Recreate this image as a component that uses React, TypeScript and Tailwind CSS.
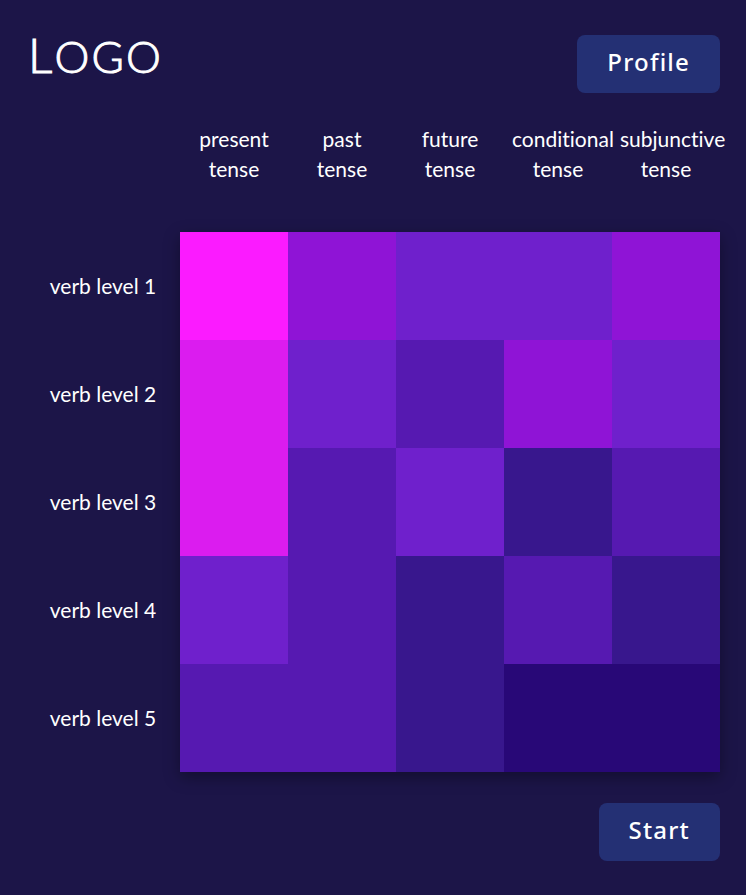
const tenses = ['present', 'past', 'future', 'conditional', 'subjunctive'];

const shades = {
  a: 'bg-[#fb1bff]',
  b: 'bg-[#db1cef]',
  c: 'bg-[#8f14d6]',
  d: 'bg-[#6f20cc]',
  e: 'bg-[#5619b1]',
  f: 'bg-[#38178d]',
  g: 'bg-[#280877]',
};

type Shade = keyof typeof shades;

const levels: Shade[][] = [
  ['a', 'c', 'd', 'd', 'c'],
  ['b', 'd', 'e', 'c', 'd'],
  ['b', 'e', 'd', 'f', 'e'],
  ['d', 'e', 'f', 'e', 'f'],
  ['e', 'e', 'f', 'g', 'g'],
];

function ActionButton({ label }: { label: string }) {
  return (
    <button
      type="button"
      className="h-[58px] rounded-lg bg-[#243074] px-[30px] pb-1 font-['Noto_Sans',sans-serif] text-2xl font-medium tracking-wider"
    >
      {label}
    </button>
  );
}

export default function App() {
  return (
    <div className="min-h-screen bg-[#1c1548] px-[26px] pt-[35px] pb-[34px] font-[Lato,sans-serif] text-white">
      <header className="mb-[23px] flex items-start justify-between">
        <h1 className="pl-0.5 text-[44px] leading-10 font-light tracking-wider [-webkit-text-stroke:1px_white]">
          <span className="text-5xl leading-10">L</span>OGO
        </h1>
        <ActionButton label="Profile" />
      </header>
      <main>
        <table className="w-full table-fixed border-collapse text-[21px] leading-[30px] [font-variant-ligatures:none]">
          <thead>
            <tr className="h-[116px]">
              <td className="w-[154px]" />
              {tenses.map((tense) => (
                <th key={tense} scope="col" className="p-2 align-top font-normal">
                  {tense}
                  <br />
                  tense
                </th>
              ))}
            </tr>
          </thead>
          <tbody className="relative before:absolute before:inset-y-0 before:right-0 before:left-[154px] before:shadow-[0_5px_15px_rgba(0,0,0,0.35)]">
            {levels.map((row, i) => (
              <tr key={i} className="h-[108px]">
                <th scope="row" className="p-2 font-normal">
                  verb level {i + 1}
                </th>
                {row.map((shade, j) => (
                  <td key={j} className={shades[shade]} />
                ))}
              </tr>
            ))}
          </tbody>
        </table>
        <div className="mt-[31px] flex justify-end">
          <ActionButton label="Start" />
        </div>
      </main>
    </div>
  );
}
